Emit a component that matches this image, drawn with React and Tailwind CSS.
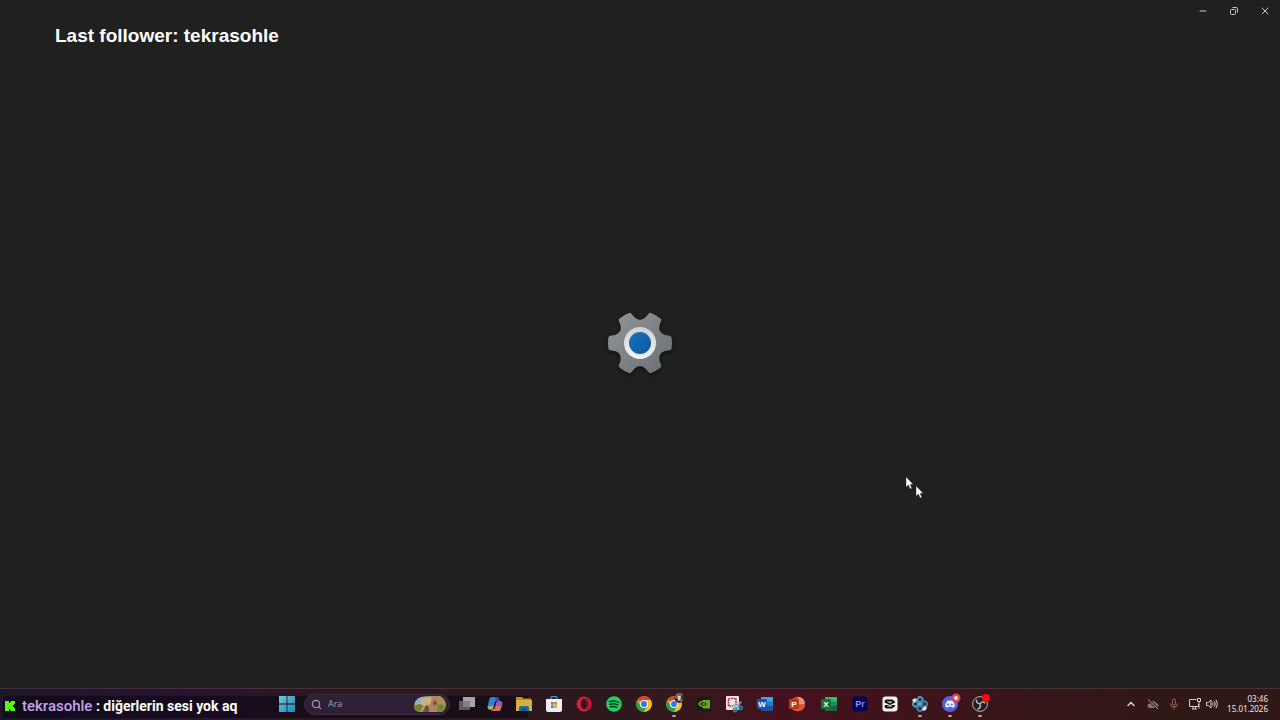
import React from 'react'
import { ChevronUp, Minus, Search, X } from 'lucide-react'

function polar(r, deg) {
  var a = (deg * Math.PI) / 180
  return (r * Math.cos(a)).toFixed(2) + ' ' + (r * Math.sin(a)).toFixed(2)
}

function gearPath() {
  var d = ''
  for (var k = 0; k < 6; k++) {
    var a = k * 60
    d += (k === 0 ? 'M' : 'L') + polar(26, a - 18)
    d += 'L' + polar(30, a - 14)
    d += 'Q' + polar(32.4, a - 13) + ' ' + polar(32, a - 9)
    d += 'A32 32 0 0 1 ' + polar(32, a + 9)
    d += 'Q' + polar(32.4, a + 13) + ' ' + polar(30, a + 14)
    d += 'L' + polar(26, a + 18)
    d += 'Q' + polar(20.6, a + 30) + ' ' + polar(26, a + 42)
  }
  return d + 'Z'
}

function SettingsGear() {
  return (
    <svg className="w-20 h-20" viewBox="-40 -40 80 80" role="img" aria-label="Settings">
      <defs>
        <linearGradient id="gear" x1="0" y1="0" x2="1" y2="1">
          <stop offset="0" stopColor="#92969a" />
          <stop offset="1" stopColor="#686f74" />
        </linearGradient>
        <linearGradient id="ring" x1="0" y1="0" x2="0" y2="1">
          <stop offset="0" stopColor="#cfd1d3" />
          <stop offset="1" stopColor="#f3f4f5" />
        </linearGradient>
        <linearGradient id="hub" x1="0" y1="0" x2="1" y2="1">
          <stop offset="0" stopColor="#1872bd" />
          <stop offset="1" stopColor="#0e57a0" />
        </linearGradient>
        <filter id="gearShadow" x="-20%" y="-20%" width="140%" height="140%">
          <feDropShadow dx="0" dy="2" stdDeviation="2" floodColor="#000" floodOpacity="0.5" />
        </filter>
      </defs>
      <path d={gearPath()} fill="url(#gear)" filter="url(#gearShadow)" />
      <circle r="16" fill="url(#ring)" />
      <circle r="11" fill="url(#hub)" />
    </svg>
  )
}

function Pointer({ className }) {
  return (
    <svg className={className} viewBox="0 0 9 14" aria-hidden="true">
      <path d="M1 .8v10.4l2.4-2.1 1.7 3.900 1.800-.8-1.700-3.700 3-.3z" fill="#fff" stroke="#111" strokeWidth=".4" />
    </svg>
  )
}

function WindowsLogo() {
  return (
    <svg className="w-4 h-4" viewBox="0 0 16 16">
      <defs>
        <linearGradient id="win" x1="0" y1="0" x2="1" y2="1">
          <stop offset="0" stopColor="#79c3dc" />
          <stop offset="1" stopColor="#1f86b4" />
        </linearGradient>
      </defs>
      <path d="M0 0h7.600v7.600H0zM8.400 0H16v7.600H8.400zM0 8.400h7.600V16H0zM8.400 8.400H16V16H8.400z" fill="url(#win)" />
    </svg>
  )
}

function SearchArt() {
  return (
    <svg className="w-8 h-4 shrink-0" viewBox="0 0 32 16" aria-hidden="true">
      <path d="M0 10Q1 3 7 1Q17-1 26 0Q32 3 32 10Q31 15 27 16H5Q0 15 0 10z" fill="#a08f68" />
      <path d="M1 6Q5 0 13 1l-3 6-9 2z" fill="#93b3be" />
      <path d="M8 3Q14 0 20 2l-2 6-6 1-4 5H3Q7 8 8 3z" fill="#ceb183" />
      <path d="M18 1l5 2 3 5-5 8h-6l1-6z" fill="#ab855f" />
      <path d="M24 1q7 2 7 9l-6-3z" fill="#b98f50" />
      <path d="M0 10l6-2 4 2-4 5H4Q0 14 0 10zM24 9l4-1 3 3-3 4-5 1z" fill="#6f852f" />
      <path d="M12 9l3 2v5H9zM21 4l2 3-2 3-2-3z" fill="#775038" />
    </svg>
  )
}

function TaskViewIcon() {
  return (
    <svg className="w-4 h-4" viewBox="0 0 16 16">
      <path d="M4 1h12v10H4z" fill="#a7a4a9" />
      <path d="M0 5h11v9H0z" fill="#5d5861" />
      <path d="M4 5h7v6H4z" fill="#858087" />
    </svg>
  )
}

function CopilotIcon() {
  return (
    <svg className="w-4 h-4" viewBox="0 0 16 16">
      <path d="M4.500 1H10q1.600 0 2 1.800L12.500 5H9.500Q8.300 5 7.900 6.300L6.300 12Q5.800 13.500 4.300 13.500H3Q0 13.500.8 10L2.200 3.500Q2.800 1 4.500 1z" fill="#2d86c9" />
      <path d="M7.500 1H10q1.600 0 2 1.800L12.500 5H9.500L8.600 2.400Q8.200 1.200 7.500 1z" fill="#2c4aa6" />
      <path d="M.7 10.500L7 9.500 6.300 12Q5.800 13.500 4.300 13.500H3Q.5 13.500.7 10.500z" fill="#a5b46a" />
      <path d="M11.500 15H6.300q-1.700 0-2.100-1.300 2.500.6 3.300-1.700L9.200 6.300Q9.600 5 11 5h2q3 0 2.300 3.500l-1.500 4.300Q13.200 15 11.500 15z" fill="#a054b8" />
      <path d="M8 10.300l6.700-.3-.9 2.800Q13.200 15 11.500 15H6.300q-1.700 0-2.100-1.300 2.500.6 3.300-1.700z" fill="#d77257" />
      <path d="M9 5.200L6.800 12.700" stroke="#1d0f22" strokeWidth="1.100" />
    </svg>
  )
}

function ExplorerIcon() {
  return (
    <svg className="w-4 h-4" viewBox="0 0 16 16">
      <path d="M0 1h6l1.500 1.500H15V7H0z" fill="#c58d22" />
      <path d="M0 4h16v11H0z" fill="#d8ae42" />
      <path d="M3 15v-3.500Q3 10 4.500 10h7q1.500 0 1.500 1.500V15z" fill="#1e6f9e" />
      <path d="M5.500 12.500h5V15h-5z" fill="#174e7b" />
    </svg>
  )
}

function StoreIcon() {
  return (
    <svg className="w-4 h-4" viewBox="0 0 16 16">
      <path d="M5 4V1.300Q5 .6 5.700.6h4.600Q11 .6 11 1.300V4" fill="none" stroke="#3b9dd8" strokeWidth="1.200" />
      <path d="M0 3h16v11q0 2-2 2H2q-2 0-2-2z" fill="#eeeef0" />
      <path d="M5 6h2.700v2.700H5z" fill="#e2593b" />
      <path d="M8.300 6H11v2.700H8.300z" fill="#79a93a" />
      <path d="M5 9.300h2.700V12H5z" fill="#2f8fc8" />
      <path d="M8.300 9.300H11V12H8.300z" fill="#e5ad31" />
    </svg>
  )
}

function OperaIcon() {
  return (
    <svg className="w-4 h-4" viewBox="0 0 16 16">
      <path fillRule="evenodd" d="M8 .5a7.500 7.500 0 1 0 0 15 7.500 7.500 0 0 0 0-15zM8 2.800c1.900 0 3.200 2.300 3.200 5.200S9.900 13.200 8 13.200 4.800 10.900 4.800 8 6.100 2.800 8 2.800z" fill="#d81d38" />
      <path d="M8 2.800c3 -1.500 5.500 1 5.500 5.200S11 14.700 8 13.200c1.900 0 3.200-2.300 3.200-5.200S9.900 2.800 8 2.800z" fill="#9d1328" />
    </svg>
  )
}

function SpotifyIcon() {
  return (
    <svg className="w-4 h-4" viewBox="0 0 16 16">
      <circle cx="8" cy="8" r="7.800" fill="#1ed15e" />
      <path d="M3.300 5.700Q8.500 4 13 6.500M3.800 8.300Q8.300 6.900 12 9M4.300 10.800q3.700-1 6.700.7" fill="none" stroke="#123420" strokeWidth="1.400" strokeLinecap="round" />
    </svg>
  )
}

function ChromeMark() {
  return (
    <g>
      <circle cx="8" cy="8" r="7.800" fill="#f3bf2c" />
      <path d="M8 8L1.250 4.100A7.800 7.800 0 0 1 14.750 4.100H8z" fill="#dc4335" />
      <path d="M8 8L4.600 9.950 1.250 4.100A7.800 7.800 0 0 0 8 15.800l3.400-5.850z" fill="#2b9d4e" />
      <path d="M8 4.100h6.750A7.800 7.800 0 0 1 8 15.800l3.400-5.850z" fill="#f3bf2c" />
      <circle cx="8" cy="8" r="4.100" fill="#f4f4f4" />
      <circle cx="8" cy="8" r="3" fill="#3478dc" />
    </g>
  )
}

function ChromeIcon() {
  return (
    <svg className="w-4 h-4" viewBox="0 0 16 16">
      <ChromeMark />
    </svg>
  )
}

function ChromeProfileIcon() {
  return (
    <svg className="w-4 h-4 overflow-visible" viewBox="0 0 16 16">
      <ChromeMark />
      <circle cx="13.500" cy="2" r="5" fill="#34291f" />
      <path d="M9 0l2-3 4 0 2 2-2 2h-3l-1 2-2-1z" fill="#75604f" />
      <path d="M11.500-.5l3.500 1-.5 3.500-2.500 1z" fill="#d8cec4" />
      <path d="M15 2l2 2-2 2.500-1-2z" fill="#8c6a52" />
    </svg>
  )
}

function NvidiaIcon() {
  return (
    <svg className="w-4 h-4" viewBox="0 0 16 16">
      <path d="M1 1h14v14H1z" fill="#17200f" />
      <path d="M7 4h7v8.500H7z" fill="#6fa321" />
      <path d="M2 8q2-3.500 5.500-3.500Q11 5 12.500 8q-2 3.500-5.500 3.500Q3.500 11 2 8z" fill="#6fa321" />
      <path d="M4 8q1.500-2 3.500-2T11 8q-1.500 2-3.500 2T4 8z" fill="#1b3010" />
      <path d="M6.200 8q.8-1.200 1.800-1.200L9.500 8 8 9.300Q7 9.300 6.200 8z" fill="#6fa321" />
    </svg>
  )
}

function SnipIcon() {
  return (
    <svg className="w-4 h-4 overflow-visible" viewBox="0 0 16 16">
      <rect width="13" height="14" rx="1" fill="#ece7e7" />
      <path d="M2.500 2.500h7.500v7.500h-7.500z" fill="none" stroke="#b92a2e" strokeWidth="1.600" strokeDasharray="1.700 .8" />
      <path d="M15 5.500L10 13" stroke="#5d9fc2" strokeWidth="2" />
      <path d="M7 8.500l7 3.500" stroke="#a9cad8" strokeWidth="1.800" />
      <circle cx="9" cy="14" r="1.700" fill="none" stroke="#2f80b4" strokeWidth="1.500" />
      <circle cx="14.700" cy="12" r="1.700" fill="none" stroke="#2f80b4" strokeWidth="1.500" />
    </svg>
  )
}

// Word, Excel: stacked sheet with a lettered tile in front
function OfficeSheet({ letter, top, mid, low, tile }) {
  return (
    <svg className="w-4 h-4" viewBox="0 0 16 16">
      <path d="M4 1h12v5H4z" fill={top} />
      <path d="M4 5.500h12v5H4z" fill={mid} />
      <path d="M4 10.500h12V15H4z" fill={low} />
      <rect y="3" width="10" height="10" rx="1" fill={tile} />
      <text x="5" y="11" textAnchor="middle" fill="#fff" fontSize="8" fontWeight="700" fontFamily="Liberation Sans, sans-serif">{letter}</text>
    </svg>
  )
}

function PowerPointIcon() {
  return (
    <svg className="w-4 h-4" viewBox="0 0 16 16">
      <circle cx="8.700" cy="8" r="7.300" fill="#c9452d" />
      <path d="M8.700.7A7.300 7.300 0 0 1 16 8H8.700z" fill="#ee8b70" />
      <path d="M1.400 8H16a7.300 7.300 0 0 1-14.600 0z" fill="#d9583b" />
      <rect y="3" width="10" height="10" rx="1" fill="#b93a22" />
      <text x="5" y="11" textAnchor="middle" fill="#fff" fontSize="8" fontWeight="700" fontFamily="Liberation Sans, sans-serif">P</text>
    </svg>
  )
}

function PremiereIcon() {
  return (
    <svg className="w-4 h-4" viewBox="0 0 16 16">
      <rect x=".5" y=".5" width="15" height="15" rx="3" fill="#07005a" />
      <text x="8" y="11" textAnchor="middle" fill="#8f8fe8" fontSize="9" fontWeight="700" fontFamily="Liberation Sans, sans-serif">Pr</text>
    </svg>
  )
}

function CapCutIcon() {
  return (
    <svg className="w-4 h-4" viewBox="0 0 16 16">
      <rect x=".5" y=".5" width="15" height="15" rx="3" fill="#f4f1f1" />
      <path d="M11 6V5.400Q11 4.500 10 4.500H4.500q-1 0-1 .9V6l9.500 4.300M11 10v.6q0 .9-1 .9H4.500q-1 0-1-.9V10L13 5.700" fill="none" stroke="#161010" strokeWidth="1.800" />
    </svg>
  )
}

function ClusterIcon() {
  return (
    <svg className="w-4 h-4" viewBox="0 0 16 16">
      <g transform="rotate(45 8 8)" strokeWidth="2">
        <rect x="2.500" y="2.500" width="4.500" height="4.500" rx="1" fill="#16242e" stroke="#4f96b5" />
        <rect x="9" y="2.500" width="4.500" height="4.500" rx="1" fill="#16242e" stroke="#3d83a6" />
        <rect x="2.500" y="9" width="4.500" height="4.500" rx="1" fill="#16242e" stroke="#4f96b5" />
        <rect x="9" y="9" width="4.500" height="4.500" rx="1" fill="#16242e" stroke="#3d83a6" />
      </g>
      <path d="M0 4l3-2 2 2-3 3zM10 13l3-3 2 1-1 3-3 1z" fill="#dfe3e8" />
      <path d="M6.500 8L8 6.500 9.500 8 8 9.500z" fill="#9bc5d8" />
    </svg>
  )
}

function DiscordIcon() {
  return (
    <svg className="w-4 h-4 overflow-visible" viewBox="0 0 16 16">
      <circle cx="8" cy="8" r="8" fill="#5661dd" />
      <path d="M5.300 4.800Q8 4 10.700 4.800 12.800 7.500 12.800 10.500q-1.200 1-2.600 1.300l-.7-1.100H6.500l-.7 1.100Q4.400 11.500 3.200 10.500 3.200 7.500 5.300 4.800z" fill="#f1f1fb" />
      <circle cx="6.200" cy="8.500" r="1" fill="#5661dd" />
      <circle cx="9.800" cy="8.500" r="1" fill="#5661dd" />
      <circle cx="14" cy="2" r="4.500" fill="#d3495a" />
      <circle cx="14" cy="2" r="2" fill="#f6dfe1" />
    </svg>
  )
}

function ObsIcon() {
  return (
    <svg className="w-4 h-4 overflow-visible" viewBox="0 0 16 16">
      <circle cx="8" cy="8" r="7.400" fill="#221e20" stroke="#b9b1b3" strokeWidth="1" />
      <path d="M8 8Q4 7.500 4.500 3.500M8 8q2-3.500 5.200-.7M8 8q1.500 3.500-2.500 5.400" fill="none" stroke="#b9b1b3" strokeWidth="1.500" />
      <circle cx="14" cy="2" r="4" fill="#f40a10" />
    </svg>
  )
}

const apps = [
  { name: 'Task View', cell: 'w-7', icon: <TaskViewIcon /> },
  { name: 'Copilot', cell: 'w-7', icon: <CopilotIcon /> },
  { name: 'File Explorer', cell: 'w-[30px]', icon: <ExplorerIcon /> },
  { name: 'Microsoft Store', cell: 'w-[30px]', icon: <StoreIcon /> },
  { name: 'Opera', cell: 'w-[30px]', icon: <OperaIcon /> },
  { name: 'Spotify', cell: 'w-[30px]', icon: <SpotifyIcon /> },
  { name: 'Chrome', cell: 'w-[30px]', icon: <ChromeIcon /> },
  { name: 'Chrome profile', cell: 'w-[30px]', icon: <ChromeProfileIcon />, running: true },
  { name: 'NVIDIA', cell: 'w-[30px]', icon: <NvidiaIcon /> },
  { name: 'Snipping Tool', cell: 'w-[30px]', icon: <SnipIcon /> },
  { name: 'Word', cell: 'w-8', icon: <OfficeSheet letter="W" top="#4aa0e4" mid="#2b78cc" low="#1b53a4" tile="#1d56b0" /> },
  { name: 'PowerPoint', cell: 'w-8', icon: <PowerPointIcon /> },
  { name: 'Excel', cell: 'w-8', icon: <OfficeSheet letter="X" top="#38b573" mid="#1f8e55" low="#176a40" tile="#14703f" /> },
  { name: 'Premiere Pro', cell: 'w-[30px]', icon: <PremiereIcon /> },
  { name: 'CapCut', cell: 'w-[30px]', icon: <CapCutIcon /> },
  { name: 'Cluster', cell: 'w-[30px]', icon: <ClusterIcon />, running: true },
  { name: 'Discord', cell: 'w-[30px]', icon: <DiscordIcon />, running: true },
  { name: 'OBS Studio', cell: 'w-[30px]', icon: <ObsIcon />, running: true },
]

function AppButton({ app }) {
  return (
    <button aria-label={app.name} className={'relative h-full flex items-center justify-center ' + app.cell}>
      {app.icon}
      {app.running && <span className="absolute bottom-0.5 w-1 h-0.5 rounded-full bg-[#b3a3a5]" />}
    </button>
  )
}

function TitleBar() {
  return (
    <header className="flex justify-end text-[#c8c8c8]">
      <button aria-label="Minimize" className="w-[31px] h-[21px] flex items-center justify-center"><Minus size={10} strokeWidth={2.5} /></button>
      <button aria-label="Restore" className="w-[31px] h-[21px] flex items-center justify-center">
        <svg className="w-2 h-2" viewBox="0 0 8 8" fill="none" stroke="currentColor">
          <rect x=".5" y="2.500" width="5" height="5" rx="1" />
          <path d="M2.500 .5H6Q7.500.5 7.500 2v3.500" />
        </svg>
      </button>
      <button aria-label="Close" className="w-[31px] h-[21px] flex items-center justify-center"><X size={12} strokeWidth={2} /></button>
    </header>
  )
}

function ChatLine() {
  return (
    <div className="w-[272px] pl-[5px] pt-1 flex items-center shrink-0 font-['Roboto',sans-serif] text-sm font-bold text-white whitespace-nowrap">
      <svg className="w-2.5 h-2.5 mr-[7px]" viewBox="0 0 10 10" aria-hidden="true">
        <path d="M0 0h4v2h1V1h1V0h4v3H9v1H8v2h1v1h1v3H6V9H5V8H4v2H0z" fill="#53fc18" />
      </svg>
      <p className="leading-5"><span className="text-[15px] font-medium text-[#c8a2ee]">tekrasohle</span> : diğerlerin sesi yok aq</p>
    </div>
  )
}

function Tray() {
  return (
    <div className="ml-auto pr-3 h-full flex items-center text-[#d8cccc]">
      <button aria-label="Show hidden icons" className="w-[22px] flex justify-center"><ChevronUp size={12} strokeWidth={3} /></button>
      <button aria-label="Cloud sync off" className="w-[22px] flex justify-center">
        <svg className="w-3 h-3" viewBox="0 0 12 12">
          <path d="M3 10q-2.500 0-2.500-2.200T3 5.500Q3.500 3 6 3t3 2.300q2.500 0 2.500 2.400T9 10z" fill="#8a7472" />
          <path d="M1 1.500l10 9.500" stroke="#3a1518" strokeWidth="2.500" />
          <path d="M1 1.500l10 9.500" stroke="#b5a4a2" strokeWidth="1" />
        </svg>
      </button>
      <button aria-label="Microphone" className="w-5 flex justify-center">
        <svg className="w-3 h-3" viewBox="0 0 12 12" fill="none" stroke="#a8605c">
          <rect x="4.500" y="1" width="3" height="6" rx="1.500" />
          <path d="M2.500 5.500q0 3.500 3.500 3.500t3.500-3.500M6 9v2.500" />
        </svg>
      </button>
      <button aria-label="Network" className="w-[22px] flex justify-center">
        <svg className="w-3 h-3" viewBox="0 0 12 12" fill="none" stroke="currentColor">
          <path d="M7.500 1.500H1q-.5 0-.5.500v6.500h9V6M3 11h5M4 8.500V11M6.500 8.500V11" />
          <path d="M8.500.5h3v3h-3zM10 3.500v7" />
        </svg>
      </button>
      <button aria-label="Volume" className="w-3 flex justify-center">
        <svg className="w-3 h-3" viewBox="0 0 12 12" fill="none" stroke="currentColor">
          <path d="M.5 4.500h2L5 2v8L2.500 7.500h-2zM6.500 4.500q1 1.500 0 3M8.300 3.200q2 2.800 0 5.600M10 1.800q3 4.200 0 8.400" />
        </svg>
      </button>
      <button className="w-[50px] text-right text-[8px] leading-[10px] font-['Noto_Sans',sans-serif] text-[#efe6e6]">
        <time className="block">03:46</time>
        <time className="block">15.01.2026</time>
      </button>
    </div>
  )
}

function Taskbar() {
  return (
    <footer className="relative h-8 pb-px flex items-center border-t border-[#43303a] bg-linear-to-r from-[#1e172b] via-[#44111d] via-60% to-[#2f1917]">
      <div className="absolute inset-0 bg-linear-to-r from-[#1c1629] from-0% via-[#2a1230] via-30% to-[#2d181e] to-50% w-1/2" />
      <div className="absolute left-[3px] bottom-0.5 w-[41%] h-[22px] bg-[#0c0714]/65" />
      <div className="absolute inset-y-0 left-1/2 right-0 bg-linear-to-r from-[#2f191c] from-0% via-[#45101d] via-22% to-[#301817] to-80%" />
      <div className="relative flex-1 h-full flex items-center">
        <ChatLine />
        <button aria-label="Start" className="w-[30px] h-full flex items-center justify-center"><WindowsLogo /></button>
        <label className="w-[146px] h-[21px] ml-0.5 mr-[3px] pl-1.5 pr-[3px] flex items-center shrink-0 rounded-full border border-[#3c2c42] bg-[#302035] text-[#a99bab]">
          <Search size={11} strokeWidth={2.5} className="shrink-0" />
          <input type="text" aria-label="Ara" placeholder="Ara" className="min-w-0 flex-1 ml-1.5 bg-transparent outline-none text-[9px] font-['Open_Sans',sans-serif] placeholder:text-[#a99bab]" />
          <SearchArt />
        </label>
        {apps.map(function(app) { return <AppButton key={app.name} app={app} /> })}
        <Tray />
      </div>
    </footer>
  )
}

export default function App() {
  return (
    <div className="relative h-screen flex flex-col overflow-hidden bg-[#202020] font-['Liberation_Sans',sans-serif]">
      <TitleBar />
      <h1 className="mt-[3px] ml-[55px] text-[19px] leading-6 font-bold text-white">Last follower: tekrasohle</h1>
      <main className="flex-1 flex justify-center pt-[255px]">
        <SettingsGear />
      </main>
      <Taskbar />
      <Pointer className="absolute left-[905px] top-[476px] w-[9px] h-[14px]" />
      <Pointer className="absolute left-[915px] top-[485px] w-[9px] h-[14px]" />
    </div>
  )
}
